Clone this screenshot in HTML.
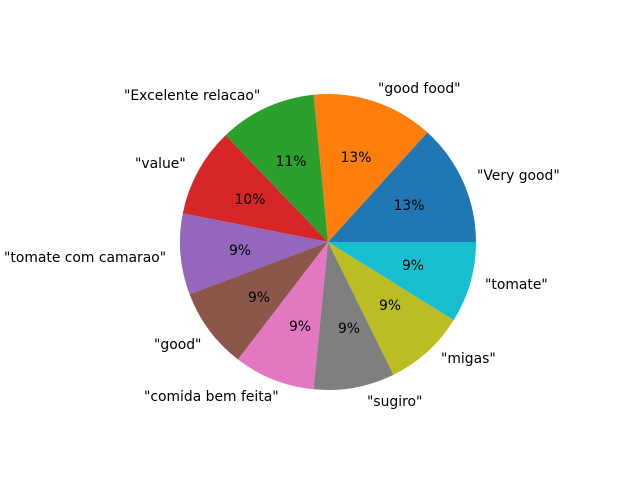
<!DOCTYPE html>
<html><head><meta charset="utf-8"><style>
html,body{margin:0;padding:0;background:#fff;}
svg{display:block;}
text{font-family:"DejaVu Sans","Liberation Sans",sans-serif;font-size:13.9px;fill:#000;dominant-baseline:central;}
</style></head><body>
<svg width="640" height="480" viewBox="0 0 640 480" xmlns="http://www.w3.org/2000/svg">
<rect width="640" height="480" fill="#fff"/>
<g>
<path d="M328,242 L476,242 A148,148 0 0 0 427.4,132.4 Z" fill="#1f77b4"/>
<path d="M328,242 L427.4,132.4 A148,148 0 0 0 313.6,94.7 Z" fill="#ff7f0e"/>
<path d="M328,242 L313.6,94.7 A148,148 0 0 0 225.6,135.2 Z" fill="#2ca02c"/>
<path d="M328,242 L225.6,135.2 A148,148 0 0 0 182.8,213.4 Z" fill="#d62728"/>
<path d="M328,242 L182.8,213.4 A148,148 0 0 0 189.6,294.3 Z" fill="#9467bd"/>
<path d="M328,242 L189.6,294.3 A148,148 0 0 0 238.0,359.5 Z" fill="#8c564b"/>
<path d="M328,242 L238.0,359.5 A148,148 0 0 0 313.6,389.3 Z" fill="#e377c2"/>
<path d="M328,242 L313.6,389.3 A148,148 0 0 0 393.5,374.7 Z" fill="#7f7f7f"/>
<path d="M328,242 L393.5,374.7 A148,148 0 0 0 453.7,320.1 Z" fill="#bcbd22"/>
<path d="M328,242 L453.7,320.1 A148,148 0 0 0 476,242 Z" fill="#17becf"/>
</g>
<g>
<text x="477" y="176">"Very good"</text>
<text x="378" y="89">"good food"</text>
<text x="124" y="96">"Excelente relacao"</text>
<text x="135" y="164">"value"</text>
<text x="4" y="258">"tomate com camarao"</text>
<text x="154" y="345">"good"</text>
<text x="144" y="397">"comida bem feita"</text>
<text x="367" y="402">"sugiro"</text>
<text x="441" y="359">"migas"</text>
<text x="485" y="285">"tomate"</text>
</g>
<g text-anchor="middle">
<text x="409" y="206">13%</text>
<text x="356" y="158">13%</text>
<text x="291" y="162">11%</text>
<text x="250" y="200">10%</text>
<text x="240" y="251">9%</text>
<text x="259" y="298">9%</text>
<text x="300" y="327">9%</text>
<text x="349" y="329">9%</text>
<text x="390" y="306">9%</text>
<text x="413" y="266">9%</text>
</g>
</svg>
</body></html>
